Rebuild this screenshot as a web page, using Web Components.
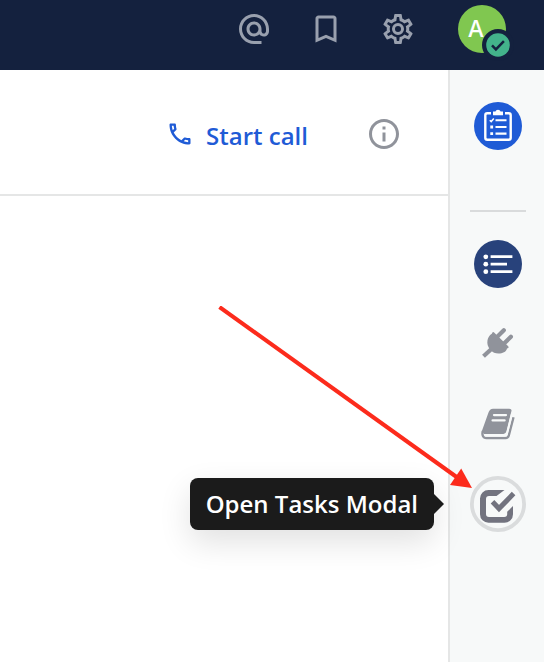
<!DOCTYPE html>
<html lang="en">
<head>
<meta charset="utf-8">
<meta name="viewport" content="width=device-width, initial-scale=1">
<title>Channel</title>
<style>
  html, body { margin: 0; height: 100%; }
  body {
    font-family: "Open Sans", "Noto Sans", sans-serif;
    --navy: #14213e;
    --blue: #1f5bd6;
    --grey: #90939b;
    --line: #e5e6e6;
    --panel: #f7f9f9;
  }
</style>
</head>
<body>
<app-shell>
  <top-bar slot="header">
    <icon-button label="Mentions" icon="at"></icon-button>
    <icon-button label="Saved messages" icon="bookmark"></icon-button>
    <icon-button label="Settings" icon="cog"></icon-button>
    <user-avatar slot="user">A</user-avatar>
  </top-bar>
  <channel-bar>
    <call-button>Start call</call-button>
    <icon-button label="View info" icon="info"></icon-button>
  </channel-bar>
  <app-rail slot="rail">
    <rail-item slot="product" label="Playbooks" icon="clipboard"></rail-item>
    <rail-item label="Toggle list" icon="list"></rail-item>
    <rail-item label="Plugins" icon="plug"></rail-item>
    <rail-item label="Library" icon="book"></rail-item>
    <rail-item label="Tasks" icon="task">
      <tool-tip slot="over">Open Tasks Modal</tool-tip>
      <pointer-arrow slot="over"></pointer-arrow>
    </rail-item>
  </app-rail>
</app-shell>

<script>
const glyphs = {
  at: '<path d="M12 2C6.48 2 2 6.48 2 12s4.48 10 10 10h5v-2h-5c-4.34 0-8-3.66-8-8s3.66-8 8-8 8 3.66 8 8v1.43c0 .79-.71 1.57-1.5 1.57s-1.5-.78-1.5-1.57V12c0-2.76-2.24-5-5-5s-5 2.24-5 5 2.24 5 5 5c1.38 0 2.64-.56 3.54-1.47.65.89 1.77 1.47 2.96 1.47 1.97 0 3.5-1.6 3.5-3.57V12c0-5.52-4.48-10-10-10zm0 13c-1.66 0-3-1.34-3-3s1.34-3 3-3 3 1.34 3 3-1.34 3-3 3z"/>',
  bookmark: '<path d="M17 3H7c-1.1 0-2 .9-2 2v16l7-3 7 3V5c0-1.1-.9-2-2-2zm0 15l-5-2.18L7 18V5h10v13z"/>',
  cog: '<path d="M12,8A4,4 0 0,1 16,12A4,4 0 0,1 12,16A4,4 0 0,1 8,12A4,4 0 0,1 12,8M12,10A2,2 0 0,0 10,12A2,2 0 0,0 12,14A2,2 0 0,0 14,12A2,2 0 0,0 12,10M10,22C9.75,22 9.54,21.82 9.5,21.58L9.13,18.93C8.5,18.68 7.96,18.34 7.44,17.94L4.95,18.95C4.73,19.03 4.46,18.95 4.34,18.73L2.34,15.27C2.21,15.05 2.27,14.78 2.46,14.63L4.57,12.97L4.5,12L4.57,11L2.46,9.37C2.27,9.22 2.21,8.95 2.34,8.73L4.34,5.27C4.46,5.05 4.73,4.96 4.95,5.05L7.44,6.05C7.96,5.66 8.5,5.32 9.13,5.07L9.5,2.42C9.54,2.18 9.75,2 10,2H14C14.25,2 14.46,2.18 14.5,2.42L14.87,5.07C15.5,5.32 16.04,5.66 16.56,6.05L19.05,5.05C19.27,4.96 19.54,5.05 19.66,5.27L21.66,8.73C21.79,8.95 21.73,9.22 21.54,9.37L19.43,11L19.5,12L19.43,13L21.54,14.63C21.73,14.78 21.79,15.05 21.66,15.27L19.66,18.73C19.54,18.95 19.27,19.04 19.05,18.95L16.56,17.95C16.04,18.34 15.5,18.68 14.87,18.93L14.5,21.58C14.46,21.82 14.25,22 14,22H10M11.25,4L10.88,6.61C9.68,6.86 8.62,7.5 7.85,8.39L5.44,7.35L4.69,8.65L6.8,10.2C6.4,11.37 6.4,12.64 6.8,13.8L4.68,15.36L5.43,16.66L7.86,15.62C8.63,16.5 9.68,17.14 10.87,17.38L11.24,20H12.76L13.13,17.39C14.32,17.14 15.37,16.5 16.14,15.62L18.57,16.66L19.32,15.36L17.2,13.81C17.6,12.64 17.6,11.37 17.2,10.2L19.31,8.65L18.56,7.35L16.15,8.39C15.38,7.5 14.32,6.86 13.12,6.62L12.75,4H11.25Z"/>',
  info: '<path d="M11 7h2v2h-2zm0 4h2v6h-2zm1-9C6.48 2 2 6.48 2 12s4.48 10 10 10 10-4.48 10-10S17.52 2 12 2zm0 18c-4.41 0-8-3.59-8-8s3.59-8 8-8 8 3.59 8 8-3.59 8-8 8z"/>',
  phone: '<path d="M20,15.5C18.8,15.5 17.5,15.3 16.4,14.9C16.3,14.9 16.2,14.9 16.1,14.9C15.8,14.9 15.6,15 15.4,15.2L13.2,17.4C10.4,15.9 8,13.6 6.6,10.8L8.8,8.6C9.1,8.3 9.2,7.9 9,7.6C8.7,6.5 8.5,5.2 8.5,4C8.5,3.5 8,3 7.5,3H4C3.5,3 3,3.5 3,4C3,13.4 10.6,21 20,21C20.5,21 21,20.5 21,20V16.5C21,16 20.5,15.5 20,15.5M5,5H6.5C6.6,5.9 6.8,6.8 7,7.6L5.8,8.8C5.4,7.6 5.1,6.3 5,5M19,19C17.7,18.9 16.4,18.6 15.2,18.2L16.4,17C17.2,17.2 18.1,17.4 19,17.4V19Z"/>'
};

const railArt = {
  clipboard: `<circle cx="28" cy="28" r="24" fill="#1f5bd6"/>
    <rect x="15.3" y="15.3" width="25.4" height="26.4" rx="2" fill="none" stroke="#fff" stroke-width="2.4"/>
    <path d="M21 13h14v5.5H21z" fill="#1f5bd6"/>
    <path d="M23 13.6h2.4a2.700 2.700 0 0 1 5.200 0H33v3.600H23z" fill="#fff"/>
    <path d="M25.5 22.2h11M25.5 29h11M25.5 35.6h11" stroke="#fff" stroke-width="2.1" fill="none"/>
    <path d="M19.8 22.2l1.4 1.4 2.6-3" stroke="#fff" stroke-width="1.6" fill="none"/>
    <path d="M20.3 27.6h2.8v2.8h-2.8zM20.3 34.2h2.8V37h-2.8z" fill="#fff"/>`,
  list: `<circle cx="28" cy="28" r="24" fill="#28427b"/>
    <g fill="#fff"><circle cx="15.8" cy="20.8" r="2.4"/><circle cx="15.8" cy="28.2" r="2.4"/><circle cx="15.8" cy="35.7" r="2.4"/></g>
    <path d="M20.6 20.7h21.8M20.6 28.2H37M20.6 35.7h21.8" stroke="#fff" stroke-width="2.8" fill="none"/>`,
  plug: `<g stroke="#90939b" fill="none">
    <path d="M27.500 20.500l6.300-6.200M34.300 27.300l6.600-6.500" stroke-width="4.200" stroke-linecap="round"/>
    <path d="M22.500 32l-9 8.300" stroke-width="4.200"/></g>
    <path d="M22.600 16.200q.8-.5 1.500.2L38.200 30.300q.8.900.1 1.700l-1.300.4c-.8 3.600-4.500 5-8.400 5-3.400 0-6-1.100-8.200-3.500-2.700-3-3.500-6.200-2.900-9.600.5-2.800 1.700-4.900 4.300-6.600z" fill="#90939b"/>`,
  book: `<path d="M23 12.700h16.300q2.800 0 2.100 2.500L36.400 35.600q-.7 2.400-3 2.400H14.200L11.800 35.200l6.700-18.700q1.200-3.800 4.500-3.800z" fill="#90939b"/>
    <path d="M12.800 35c-.9 3.600-.2 7 3.700 7h19.100q2.500 0 3.200-2.500l4.700-18.300" fill="none" stroke="#90939b" stroke-width="2.400"/>
    <path d="M14.800 38.300h18.400q2.700 0 3.400-2.800l4.300-17.500 1.500 2-4.700 18.300q-.6 2.500-2.800 2.500H16q-2.300 0-1.200-2.500z" fill="#f7f9f9"/>
    <path d="M24 19.100h12M22.600 24.400h12" stroke="#f7f9f9" stroke-width="2.300" stroke-linecap="round" fill="none"/>`,
  task: `<circle cx="28" cy="28" r="26.100" fill="none" stroke="#dadcdd" stroke-width="3.800"/>
    <path d="M34.500 14H18.500a8.500 8.500 0 0 0-8.500 8.500v15.700a8.500 8.500 0 0 0 8.500 8.500h16a8.500 8.500 0 0 0 8.500-8.500V30l-5.800 5.800v2.200a3 3 0 0 1-3 3H19a3 3 0 0 1-3-3V23a3 3 0 0 1 3-3h7.500z" fill="#72737f"/>
    <path d="M22.500 25.800l6.500 6.800 14.600-15" fill="none" stroke="#72737f" stroke-width="5"/>`
};

function define(name, render) {
  customElements.define(name, class extends HTMLElement {
    connectedCallback() {
      if (this.shadowRoot) return;
      this.attachShadow({ mode: "open" }).innerHTML = render(this);
    }
  });
}

define("app-shell", () => `
  <style>
    :host { display: grid; grid-template: auto 1fr / 1fr auto; min-height: 100vh; background: #fff; }
    header { grid-column: 1 / -1; }
    main { min-width: 0; }
    aside { display: grid; }
  </style>
  <header><slot name="header"></slot></header>
  <main><slot></slot></main>
  <aside><slot name="rail"></slot></aside>`);

define("top-bar", () => `
  <style>
    :host { display: flex; justify-content: flex-end; gap: 36px; padding: 5px 38px 17px 16px;
      background: var(--navy); --icon: #99a0ae; }
    nav { display: flex; gap: 24px; }
  </style>
  <nav><slot></slot></nav><slot name="user"></slot>`);

define("icon-button", el => `
  <style>
    :host { display: block; }
    button { display: grid; place-items: center; width: 48px; height: 48px; padding: 0; border: 0;
      background: none; cursor: pointer; }
    svg { width: 36px; height: 36px; fill: var(--icon, var(--grey)); }
  </style>
  <button aria-label="${el.getAttribute("label")}"><svg viewBox="0 0 24 24" aria-hidden="true">${glyphs[el.getAttribute("icon")]}</svg></button>`);

define("user-avatar", () => `
  <style>
    :host { display: block; position: relative; }
    button { display: grid; place-items: center; width: 48px; height: 48px; padding: 0 12px 0 0; border: 0;
      border-radius: 50%; background: #80c750; color: #fff; font: 500 23px/48px Inter, sans-serif; cursor: pointer; }
    svg { position: absolute; right: -8px; bottom: -8px; width: 32px; height: 32px; pointer-events: none; }
  </style>
  <button aria-label="User menu"><slot></slot></button>
  <svg viewBox="0 0 32 32" aria-hidden="true">
    <circle cx="16" cy="16" r="16" fill="#14213e"/><circle cx="16" cy="16" r="11.800" fill="#43b38b"/>
    <path d="M10 16.400l3.900 4 8-8.200" fill="none" stroke="#14213e" stroke-width="2.500"/>
  </svg>`);

define("channel-bar", () => `
  <style>
    :host { display: flex; justify-content: flex-end; gap: 52px; padding: 40px 40px 36px 16px;
      border-bottom: 2px solid var(--line); }
  </style>
  <slot></slot>`);

define("call-button", () => `
  <style>
    :host { display: block; }
    button { display: flex; align-items: flex-start; gap: 12px; padding: 10px 0 6px; border: 0; background: none;
      color: var(--blue); font: 600 24px/32px "Open Sans", sans-serif; white-space: nowrap; cursor: pointer; }
    svg { width: 28px; height: 28px; fill: currentColor; }
  </style>
  <button><svg viewBox="0 0 24 24" aria-hidden="true">${glyphs.phone}</svg><span><slot></slot></span></button>`);

define("app-rail", () => `
  <style>
    :host { display: flex; flex-direction: column; gap: 24px; padding: 28px 18px 28px 20px;
      border-left: 2px solid var(--line); background: var(--panel); }
    hr { width: 100%; height: 2px; margin: 32px 0 0; border: 0; background: #d9dbdc; }
  </style>
  <slot name="product"></slot><hr><slot></slot>`);

define("rail-item", el => `
  <style>
    :host { display: block; position: relative; }
    button { display: block; width: 56px; height: 56px; padding: 0; border: 0; border-radius: 50%;
      background: none; cursor: pointer; }
    svg { display: block; width: 100%; height: 100%; }
  </style>
  <button aria-label="${el.getAttribute("label")}"><svg viewBox="0 0 56 56" aria-hidden="true">${railArt[el.getAttribute("icon")]}</svg></button>
  <slot name="over"></slot>`);

define("tool-tip", () => `
  <style>
    :host { display: block; position: absolute; top: 2px; right: calc(100% + 36px); padding: 10px 16px;
      border-radius: 8px; background: #1b1b1b; color: #fff; font-size: 24px; font-weight: 600;
      line-height: 32px; white-space: nowrap; box-shadow: 0 12px 32px rgba(0, 0, 0, .12); }
    :host::after { content: ""; position: absolute; left: 100%; top: 16px;
      border: solid transparent; border-width: 10px 0 10px 10px; border-left-color: #1b1b1b; }
  </style>
  <span role="tooltip"><slot></slot></span>`);

define("pointer-arrow", () => `
  <style>
    :host { display: block; position: absolute; right: 54px; bottom: 44px; pointer-events: none; }
    svg { display: block; width: 254px; height: 182px; }
  </style>
  <svg viewBox="0 0 254 182" fill="#fc2b1c" aria-hidden="true">
    <path d="M1.500 1L240 172" stroke="#fc2b1c" stroke-width="4"/>
    <path d="M254 182l-10.800-19.400L232 179z"/>
  </svg>`);
</script>
</body>
</html>
